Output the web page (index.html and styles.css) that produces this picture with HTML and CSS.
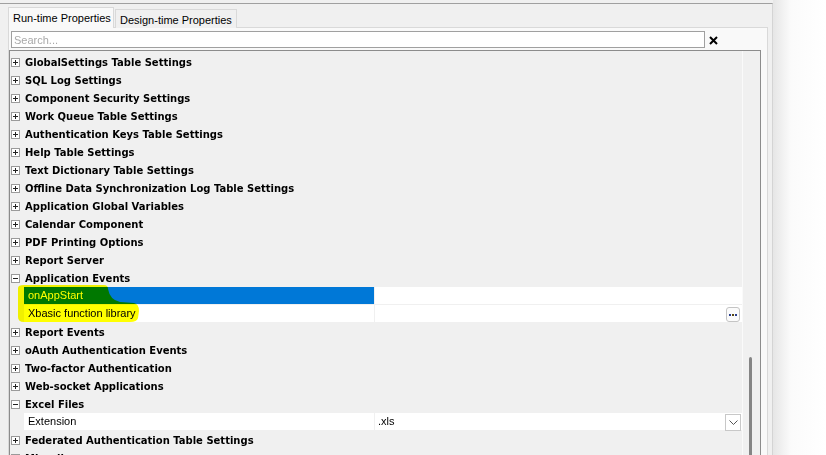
FILE: index.html
```html
<!DOCTYPE html>
<html lang="en">
  <head>
    <meta charset="UTF-8" />
    <meta name="viewport" content="width=device-width, initial-scale=1.0" />
    <title>Properties</title>
    <link rel="stylesheet" href="styles.css">
  </head>
  <body>
    <div class="app">
      <div class="panel">
        <div class="tabs">
          <div class="tab active">Run-time Properties</div>
          <div class="tab">Design-time Properties</div>
        </div>
        <div class="page">
          <div class="search-row">
            <input class="search" type="text" placeholder="Search..." />
            <svg class="clear" width="9" height="9" viewBox="0 0 9 9">
              <path d="M1 1 L8 8 M8 1 L1 8" stroke="#000" stroke-width="2" />
            </svg>
          </div>
          <div class="grid">
            <div class="rows">
              <div class="cat"><span class="toggle"></span>GlobalSettings Table Settings</div>
              <div class="cat"><span class="toggle"></span>SQL Log Settings</div>
              <div class="cat"><span class="toggle"></span>Component Security Settings</div>
              <div class="cat"><span class="toggle"></span>Work Queue Table Settings</div>
              <div class="cat"><span class="toggle"></span>Authentication Keys Table Settings</div>
              <div class="cat"><span class="toggle"></span>Help Table Settings</div>
              <div class="cat"><span class="toggle"></span>Text Dictionary Table Settings</div>
              <div class="cat"><span class="toggle"></span>Offline Data Synchronization Log Table Settings</div>
              <div class="cat"><span class="toggle"></span>Application Global Variables</div>
              <div class="cat"><span class="toggle"></span>Calendar Component</div>
              <div class="cat"><span class="toggle"></span>PDF Printing Options</div>
              <div class="cat"><span class="toggle"></span>Report Server</div>
              <div class="cat"><span class="toggle open"></span>Application Events</div>
              <div class="prop selected">
                <div class="label">onAppStart</div>
                <div class="value"></div>
              </div>
              <div class="prop">
                <div class="label">Xbasic function library</div>
                <div class="value">
                  <span class="dots-btn">
                    <svg width="8" height="2" viewBox="0 0 8 2">
                      <rect x="0" y="0" width="2" height="2" fill="#2a3f8f" />
                      <rect x="3" y="0" width="2" height="2" fill="#5a4a10" />
                      <rect x="6" y="0" width="2" height="2" fill="#2a3f8f" />
                    </svg>
                  </span>
                </div>
              </div>
              <div class="cat"><span class="toggle"></span>Report Events</div>
              <div class="cat"><span class="toggle"></span>oAuth Authentication Events</div>
              <div class="cat"><span class="toggle"></span>Two-factor Authentication</div>
              <div class="cat"><span class="toggle"></span>Web-socket Applications</div>
              <div class="cat"><span class="toggle open"></span>Excel Files</div>
              <div class="prop">
                <div class="label">Extension</div>
                <div class="value">.xls
                  <span class="drop-btn">
                    <svg width="9" height="5" viewBox="0 0 9 5">
                      <path d="M0.5 0.5 L4.5 4.5 L8.5 0.5" stroke="#555" fill="none" />
                    </svg>
                  </span>
                </div>
              </div>
              <div class="cat"><span class="toggle"></span>Federated Authentication Table Settings</div>
              <div class="cat"><span class="toggle"></span>Miscellaneous</div>
            </div>
            <div class="scroll">
              <div class="thumb"></div>
            </div>
          </div>
        </div>
      </div>
      <div class="side"></div>

      <!-- highlighter marks over the Application Events rows -->
      <svg class="marker" width="130" height="42" viewBox="0 0 130 42">
        <path d="M2 5 Q2 2 8 2 L88 2 Q92 2 92 6 Q94 17 104 19 L118 20 Q123 21 123 28 L122 35 Q121 39 114 39 L8 39 Q2 39 2 34 Z" fill="#ffff00" />
      </svg>
    </div>
  </body>
</html>
```

FILE: styles.css
```css
body {
  margin: 0;
  background-color: #f0f0f0;
  font-family: "Liberation Sans", Arial, sans-serif;
  font-size: 11px;
  color: #000;
  overflow: hidden;
}
.app {
  position: relative;
  display: flex;
  height: 455px;
  overflow: hidden;
}
.panel {
  width: 773px;
  box-sizing: border-box;
  margin-top: 3px;
  padding-top: 3px;
  border-top: 1px solid #a0a0a0;
  border-right: 1px solid #d4d4d4;
}
.side {
  flex: 1;
  background: linear-gradient(to right, #e6e6e6, #fbfbfb 18px, #fff);
}

/* tabs */
.tabs {
  display: flex;
  align-items: flex-end;
  margin-left: 8px;
  height: 21px;
  position: relative;
  z-index: 1;
}
.tab {
  height: 19px;
  box-sizing: border-box;
  padding: 4px 4px 0 4px;
  border: 1px solid #d9d9d9;
  border-bottom: none;
  background-color: #f0f0f0;
  margin-left: 1px;
}
.tab.active {
  height: 21px;
  width: 106px;
  padding: 4px 0 0 4px;
  margin-left: 0;
  background-color: #f9f9f9;
}
.page {
  width: 760px;
  box-sizing: border-box;
  margin-left: 8px;
  margin-top: -1px;
  border: 1px solid #d9d9d9;
  border-bottom: none;
  padding-top: 3px;
  background-color: #f9f9f9;
  height: 430px;
}

/* search */
.search-row {
  display: flex;
  align-items: center;
  margin-left: 2px;
}
.search {
  width: 694px;
  height: 17px;
  box-sizing: border-box;
  border: 1px solid #a0a0a0;
  padding: 0 2px;
  font-family: "Liberation Sans", Arial, sans-serif;
  font-size: 11px;
  outline: none;
  margin: 0;
}
.search::placeholder {
  color: #a9a9a9;
}
.clear {
  margin-left: 4px;
  margin-top: 1px;
}

/* property grid */
.grid {
  display: flex;
  width: 752px;
  height: 420px;
  box-sizing: border-box;
  margin-top: 2px;
  border: 1px solid #8c8c8c;
  border-bottom: none;
  background-color: #f0f0f0;
}
.rows {
  flex: 1;
  padding-top: 2px;
}
.cat {
  display: flex;
  align-items: center;
  height: 18px;
  font-family: "DejaVu Sans", Verdana, sans-serif;
  font-weight: bold;
  font-size: 10px;
  padding-left: 1px;
}
.toggle {
  width: 9px;
  height: 9px;
  box-sizing: border-box;
  border: 1px solid #9a9a9a;
  background:
    linear-gradient(#222, #222) center / 5px 1px no-repeat,
    linear-gradient(#222, #222) center / 1px 5px no-repeat,
    #fff;
  margin-right: 5px;
}
.toggle.open {
  background:
    linear-gradient(#222, #222) center / 5px 1px no-repeat,
    #fff;
}
.prop {
  display: flex;
  height: 18px;
  box-sizing: border-box;
  margin-left: 14px;
  background-color: #fff;
  border-bottom: 1px solid #f0f0f0;
}
.label {
  width: 351px;
  box-sizing: border-box;
  border-right: 1px solid #f0f0f0;
  padding: 2px 0 0 4px;
}
.prop.selected .label {
  background-color: #0078d7;
  color: #fff;
}
.value {
  flex: 1;
  display: flex;
  align-items: flex-start;
  justify-content: space-between;
  padding: 2px 2px 0 3px;
}
.dots-btn {
  margin-left: auto;
  width: 14px;
  height: 15px;
  box-sizing: border-box;
  border: 1px solid #c4c4c4;
  border-radius: 3px;
  background-color: #fbfbfb;
  display: flex;
  align-items: center;
  justify-content: center;
}
.drop-btn {
  width: 16px;
  height: 17px;
  box-sizing: border-box;
  border: 1px solid #c8c8c8;
  background-color: #fff;
  display: flex;
  align-items: center;
  justify-content: center;
  margin-top: -1px;
  margin-right: -1px;
}
.scroll {
  width: 18px;
  box-sizing: border-box;
  border-left: 1px solid #fafafa;
  background-color: #f0f0f0;
}
.thumb {
  width: 3px;
  height: 120px;
  margin: 306px 0 0 6px;
  border-radius: 2px 2px 0 0;
  background-color: #858585;
}

/* yellow highlighter stroke */
.marker {
  position: absolute;
  left: 16px;
  top: 283px;
  mix-blend-mode: multiply;
}
```
